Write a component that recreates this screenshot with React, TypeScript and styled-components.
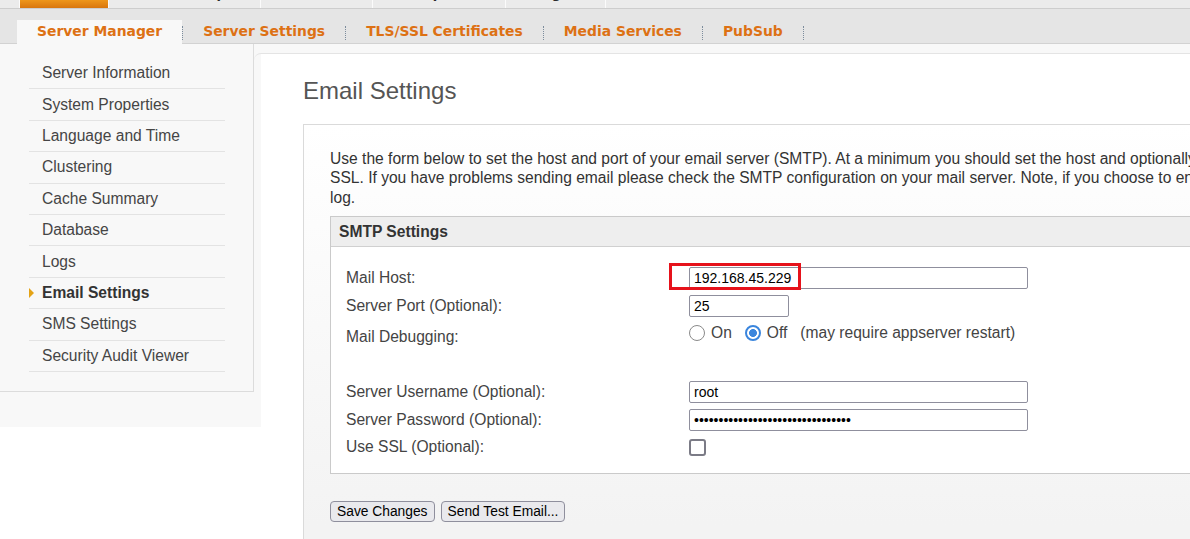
import React from "react";
import styled, { createGlobalStyle, css } from "styled-components";

const GlobalStyle = createGlobalStyle`
  html, body { margin: 0; padding: 0; background: #fff; overflow: hidden; }
  body { font-family: "Liberation Sans", Arial, sans-serif; width: 1190px; height: 539px; }
  * { box-sizing: border-box; }
`;

const TopNav = styled.nav`
  display: flex;
  height: 9px;
  padding-left: 19px;
  background: #ebebeb;
  border-bottom: 1px solid #cdcdcd;
  overflow: hidden;
`;

const TopTab = styled.div<{ $w: number; $active?: boolean; $first?: boolean }>`
  flex: none;
  width: ${(p) => p.$w + 1}px;
  height: 8px;
  border-right: 1px solid #fbfbfb;
  ${(p) => p.$first && css`border-left: 1px solid #fbfbfb; width: ${p.$w + 2}px;`}
  background: ${(p) => (p.$active ? "linear-gradient(#ee961a, #d9760d)" : "transparent")};
  overflow: hidden;
`;

const TopTabLabel = styled.span<{ $active?: boolean }>`
  display: block;
  margin-top: -13px;
  line-height: 13px;
  text-align: center;
  font: bold 13px/13px "DejaVu Sans", Verdana, sans-serif;
  color: ${(p) => (p.$active ? "#fff" : "#2a2a2a")};
`;

const SubNav = styled.nav`
  display: flex;
  align-items: flex-end;
  height: 35px;
  padding-left: 17px;
  background: #e5e5e5;
  border-bottom: 1px solid #d2d2d2;
`;

const SubTab = styled.div<{ $active?: boolean }>`
  flex: none;
  padding: 2px 20px 4px;
  margin-bottom: -1px;
  font: bold 13.9px/18px "DejaVu Sans", Verdana, sans-serif;
  color: #dd7114;
  background: ${(p) => (p.$active ? "#f8f8f8" : "transparent")};
`;

const SubSep = styled.span`
  flex: none;
  width: 1px;
  height: 14px;
  margin-bottom: 3px;
  border-left: 1px dotted #7c8c9c;
`;

const Workspace = styled.div`
  display: flex;
  align-items: flex-start;
  background: linear-gradient(#f8f8f8 9px, #fff 9px);
`;

const LeftColumn = styled.aside`
  flex: none;
  width: 261px;
  height: 383px;
  background: #f8f8f8;
`;

const Sidebar = styled.div`
  width: 254px;
  padding: 14px 0 19px 29px;
  border-right: 1px solid #dcdcdc;
  border-bottom: 1px solid #dcdcdc;
`;

const NavList = styled.ul`
  list-style: none;
  margin: 0;
  padding: 0;
  width: 196px;
`;

const NavItem = styled.li<{ $active?: boolean }>`
  position: relative;
  display: flex;
  align-items: center;
  height: 31.4px;
  padding-left: 13px;
  border-bottom: 1px solid #e3e3e3;
  font-size: 15.6px;
  color: ${(p) => (p.$active ? "#333" : "#454545")};
  font-weight: ${(p) => (p.$active ? "bold" : "normal")};
  ${(p) =>
    p.$active &&
    css`
      &::before {
        content: "";
        position: absolute;
        left: 0;
        top: 50%;
        margin-top: -5px;
        border-left: 5px solid #e4a316;
        border-top: 5px solid transparent;
        border-bottom: 5px solid transparent;
      }
    `}
`;

const MainPanel = styled.main`
  flex: 1;
  min-height: 500px;
  margin-left: -7px;
  margin-top: 9px;
  padding: 23px 0 0 49px;
  border-top: 1px solid #e4e4e4;
  border-top-left-radius: 7px;
  background: linear-gradient(to right, transparent 7px, #fff 7px);
`;

const Heading = styled.h1`
  margin: 0;
  font-size: 24px;
  line-height: 27.6px;
  font-weight: normal;
  color: #555;
`;

const InfoBox = styled.section`
  width: 1000px;
  margin-top: 19px;
  padding: 24px 26px 60px;
  border: 1px solid #dadada;
  background: linear-gradient(#fff, #f3f3f3 400px);
`;

const Description = styled.p`
  margin: 0 0 9px;
  font-size: 15.6px;
  line-height: 19.5px;
  color: #333;
  white-space: nowrap;
`;

const SmtpBox = styled.div`
  border: 1px solid #cacaca;
  background: #fff;
`;

const SmtpHeader = styled.div`
  display: flex;
  align-items: center;
  height: 30px;
  padding: 0 8px;
  background: #eee;
  border-bottom: 1px solid #d0d0d0;
  font-size: 15.6px;
  font-weight: bold;
  color: #333;
`;

const FormGrid = styled.div`
  display: grid;
  grid-template-columns: 343px 1fr;
  grid-template-rows: 28px 28px 34px 24px 28px 28px 26px;
  align-items: center;
  padding: 17px 15px 13px;
`;

const Label = styled.label`
  font-size: 15.6px;
  color: #444;
`;

const Spacer = styled.div`
  grid-column: 1 / -1;
`;

const Field = styled.div`
  position: relative;
  display: flex;
  width: fit-content;
`;

const TextInput = styled.input<{ $w: number }>`
  width: ${(p) => p.$w}px;
  height: 22px;
  margin: 0;
  padding: 0 4px;
  border: 1px solid #8f8f9d;
  border-radius: 2px;
  background: #fff;
  font: 14px "Liberation Sans", Arial, sans-serif;
  color: #000;
  outline: none;
`;

const RedMark = styled.span`
  position: absolute;
  left: -20px;
  top: -4px;
  width: 132px;
  height: 27px;
  border: 3px solid #e6121b;
  pointer-events: none;
`;

const RadioGroup = styled.div`
  display: flex;
  align-items: center;
  align-self: start;
  margin-top: 4px;
  font-size: 15.6px;
  color: #444;
`;

const RadioOption = styled.label`
  display: flex;
  align-items: center;
  gap: 6px;
  margin-right: 13px;
`;

const Radio = styled.input`
  appearance: none;
  width: 16px;
  height: 16px;
  margin: 0;
  border: 1.5px solid #8a8a8a;
  border-radius: 50%;
  background: #fff;
  &:checked {
    border: 2px solid #3a85dd;
    background: radial-gradient(circle, #3a85dd 0 3.6px, #fff 4.3px);
  }
`;

const Hint = styled.span``;

const Checkbox = styled.input`
  appearance: none;
  width: 17px;
  height: 17px;
  margin: 0;
  border: 2px solid #7b7b86;
  border-radius: 3px;
  background: #fff;
`;

const ButtonRow = styled.div`
  display: flex;
  gap: 6px;
  margin-top: 27px;
`;

const Button = styled.button`
  height: 21px;
  padding: 0 6px;
  border: 1px solid #8f8f9d;
  border-radius: 4px;
  background: #e9e9ed;
  font: 13.8px "Liberation Sans", Arial, sans-serif;
  color: #000;
`;

const topTabs = [
  { label: "Server", w: 88, active: true },
  { label: "Users/Groups", w: 151 },
  { label: "Sessions", w: 111 },
  { label: "Group Chat", w: 132 },
  { label: "Plugins", w: 99 },
];

const subTabs = ["Server Manager", "Server Settings", "TLS/SSL Certificates", "Media Services", "PubSub"];

const navItems = [
  "Server Information",
  "System Properties",
  "Language and Time",
  "Clustering",
  "Cache Summary",
  "Database",
  "Logs",
  "Email Settings",
  "SMS Settings",
  "Security Audit Viewer",
];

export default function App() {
  return (
    <>
      <GlobalStyle />
      <TopNav>
        {topTabs.map((t, i) => (
          <TopTab key={t.label} $w={t.w} $active={t.active} $first={i === 0}>
            <TopTabLabel $active={t.active}>{t.label}</TopTabLabel>
          </TopTab>
        ))}
      </TopNav>
      <SubNav>
        {subTabs.map((t, i) => (
          <React.Fragment key={t}>
            <SubTab $active={i === 0}>{t}</SubTab>
            <SubSep />
          </React.Fragment>
        ))}
      </SubNav>
      <Workspace>
        <LeftColumn>
          <Sidebar>
            <NavList>
              {navItems.map((n) => (
                <NavItem key={n} $active={n === "Email Settings"}>
                  {n}
                </NavItem>
              ))}
            </NavList>
          </Sidebar>
        </LeftColumn>
        <MainPanel>
          <Heading>Email Settings</Heading>
          <InfoBox>
            <Description>
              Use the form below to set the host and port of your email server (SMTP). At a minimum you should set the host and optionally the port, username, password and whether to use
              <br />
              SSL. If you have problems sending email please check the SMTP configuration on your mail server. Note, if you choose to enable mail debugging, the output will be written to the error
              <br />
              log.
            </Description>
            <SmtpBox>
              <SmtpHeader>SMTP Settings</SmtpHeader>
              <FormGrid>
                <Label>Mail Host:</Label>
                <Field>
                  <TextInput $w={339} type="text" value="192.168.45.229" readOnly />
                  <RedMark />
                </Field>
                <Label>Server Port (Optional):</Label>
                <Field>
                  <TextInput $w={100} type="text" value="25" readOnly />
                </Field>
                <Label>Mail Debugging:</Label>
                <RadioGroup>
                  <RadioOption>
                    <Radio type="radio" name="debug" readOnly />
                    On
                  </RadioOption>
                  <RadioOption>
                    <Radio type="radio" name="debug" checked readOnly />
                    Off
                  </RadioOption>
                  <Hint>(may require appserver restart)</Hint>
                </RadioGroup>
                <Spacer />
                <Label>Server Username (Optional):</Label>
                <Field>
                  <TextInput $w={339} type="text" value="root" readOnly />
                </Field>
                <Label>Server Password (Optional):</Label>
                <Field>
                  <TextInput $w={339} type="password" value="openfiremailpassword1234567890ab" readOnly />
                </Field>
                <Label>Use SSL (Optional):</Label>
                <Field>
                  <Checkbox type="checkbox" readOnly />
                </Field>
              </FormGrid>
            </SmtpBox>
            <ButtonRow>
              <Button type="button">Save Changes</Button>
              <Button type="button">Send Test Email...</Button>
            </ButtonRow>
          </InfoBox>
        </MainPanel>
      </Workspace>
    </>
  );
}
